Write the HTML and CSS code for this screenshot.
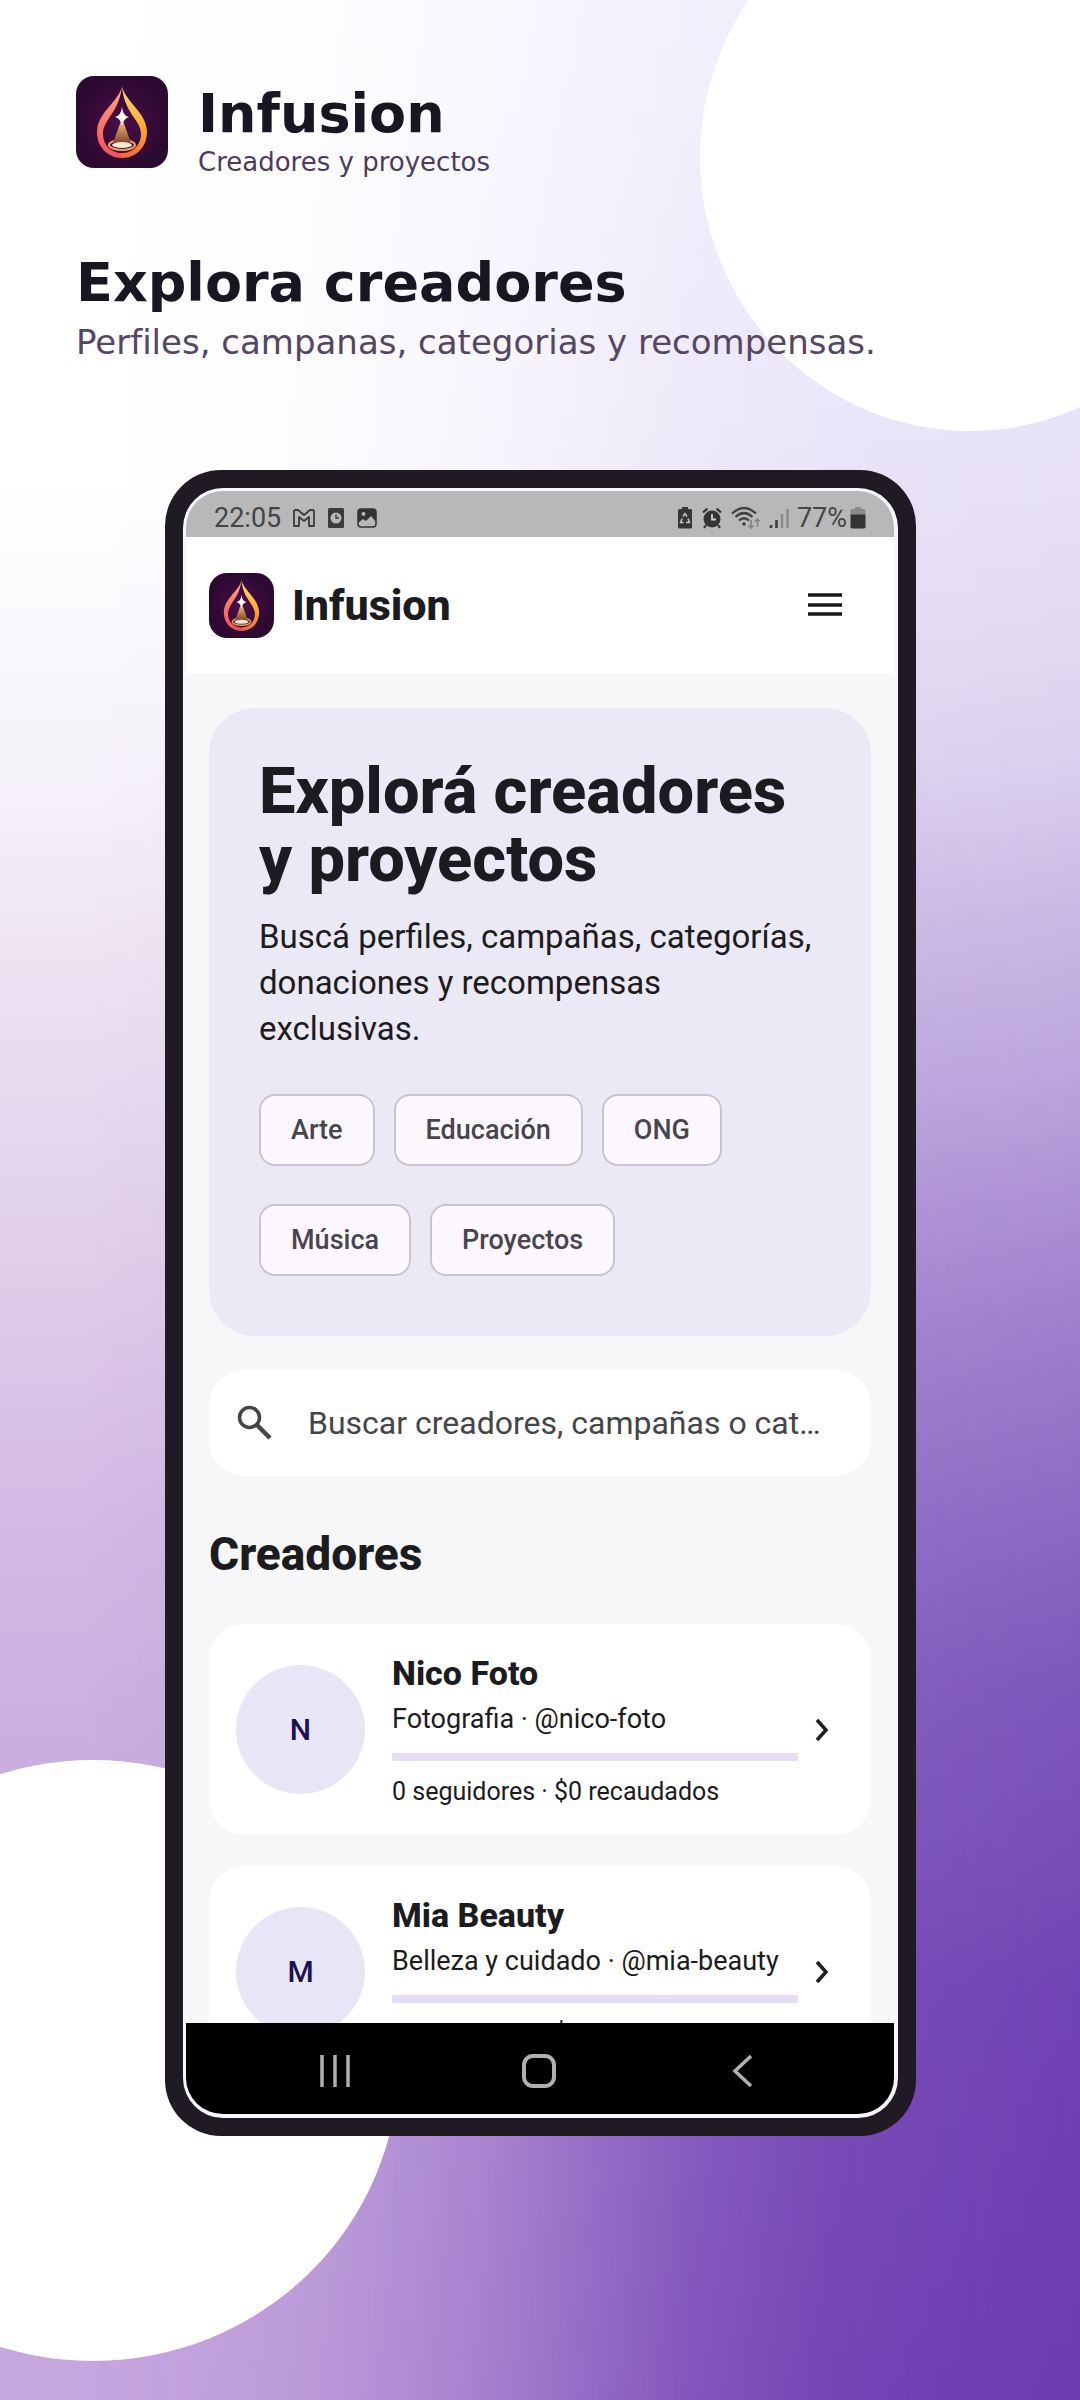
FILE: index.html
```html
<!DOCTYPE html>
<html lang="es">
<head>
<meta charset="utf-8">
<meta name="viewport" content="width=device-width, initial-scale=1">
<title>Infusion – Explora creadores</title>
<link rel="stylesheet" href="styles.css">
</head>
<body>
<svg class="defs" width="0" height="0" aria-hidden="true">
  <defs>
    <radialGradient id="plum"><stop offset="0" stop-color="#4a0d4b"/><stop offset="1" stop-color="#2c0930"/></radialGradient>
    <linearGradient id="coral" x1="0" y1="0" x2="0" y2="1"><stop offset="0" stop-color="#ffb27a"/><stop offset=".45" stop-color="#fb7c67"/><stop offset="1" stop-color="#f2505a"/></linearGradient>
    <linearGradient id="amber" x1="0" y1="0" x2="0" y2="1"><stop offset="0" stop-color="#ffd98a"/><stop offset=".5" stop-color="#fdb233"/><stop offset="1" stop-color="#f7683f"/></linearGradient>
    <linearGradient id="beam" x1="0" y1="0" x2="0" y2="1"><stop offset="0" stop-color="#ffd9a0"/><stop offset=".5" stop-color="#c98a52"/><stop offset="1" stop-color="#7d4530"/></linearGradient>
    <symbol id="logo" viewBox="0 0 92 92">
      <rect width="92" height="92" fill="url(#plum)"/>
      <path fill="url(#coral)" d="M46 9C45 24 21 36 21 56C21 71 32 82 46 82V77C35 77 27 69 27 58C27 43 44 36 46 9Z"/>
      <path fill="url(#amber)" d="M46 9C47 24 71 36 71 56C71 71 60 82 46 82V77C57 77 65 69 65 58C65 44 47 36 46 9Z"/>
      <ellipse cx="46" cy="69" rx="13" ry="5" fill="none" stroke="#f5a04c" stroke-width="2"/>
      <path fill="url(#beam)" d="M46 42L55 67H37Z"/>
      <ellipse cx="46" cy="69" rx="10" ry="3" fill="#fbe6cf"/>
      <path fill="#fff6ea" d="M46 31Q47 40 53 41Q47 43 46 50Q45 43 39 41Q45 40 46 31Z"/>
    </symbol>
  </defs>
</svg>

<div class="page">
  <div class="backdrop" aria-hidden="true">
    <div class="backdrop-right"></div>
    <div class="disc disc-top"></div>
    <div class="disc disc-bottom"></div>
  </div>

  <header class="intro">
    <div class="brand">
      <svg class="brand-logo" role="img" aria-label="Infusion"><use href="#logo"/></svg>
      <div class="brand-text">
        <p class="brand-name">Infusion</p>
        <p class="brand-tag">Creadores y proyectos</p>
      </div>
    </div>
    <h1 class="intro-title">Explora creadores</h1>
    <p class="intro-sub">Perfiles, campanas, categorias y recompensas.</p>
  </header>

  <div class="stage">
    <div class="phone">
      <div class="screen">
        <div class="status">
          <div class="status-group">
            <span class="status-text">22:05</span>
            <svg class="status-m" viewBox="0 0 22 18"><path d="M1 2.500Q1 1 2.500 1H5L11 6L17 1H19.500Q21 1 21 2.500V17H16V8L11 12L6 8V17H1Z" fill="none" stroke="#3c3c3d" stroke-width="1.800" stroke-linejoin="round"/></svg>
            <svg class="status-clock" viewBox="0 0 18 22"><rect x="1" y="1" width="16" height="20" rx="1.500" fill="#3a3a3b"/><circle cx="9" cy="11" r="5.500" fill="#b8b8ba"/><path d="M9 7.500V11H12" fill="none" stroke="#3a3a3b" stroke-width="1.500"/></svg>
            <svg class="status-photo" viewBox="0 0 20 20"><rect x="1" y="1" width="18" height="18" rx="3" fill="#b8b8ba" stroke="#333" stroke-width="1.500"/><path d="M1 3Q1 1 3 1H17Q19 1 19 3V14L14 8L9 13L6 11L1 15Z" fill="#333"/><circle cx="6.500" cy="6" r="2" fill="#b8b8ba"/></svg>
          </div>
          <div class="status-group status-right">
            <svg class="status-saver" viewBox="0 0 16 22"><path d="M5 0H11V2H14Q15 2 15 3.500V20Q15 21.500 13.500 21.500H2.500Q1 21.500 1 20V3.500Q1 2 2.500 2H5Z" fill="#353536"/><path d="M6 9.500L8 6.500L10 9.500M11 11.500L12.500 15.500H9M6.500 15.500H3.500L5 11.500" fill="none" stroke="#c6c6c8" stroke-width="1.500"/></svg>
            <svg class="status-alarm" viewBox="0 0 22 22"><circle cx="11" cy="12" r="8.500" fill="#353536"/><path d="M2 5.500L6.500 1.500M20 5.500L15.500 1.500M5 18L3 21M17 18L19 21" stroke="#353536" stroke-width="2.200"/><path d="M11 7V12.500H15" fill="none" stroke="#d2d2d4" stroke-width="1.800"/></svg>
            <svg class="status-wifi" viewBox="0 0 30 24"><g fill="none" stroke="#404041" stroke-width="2.200"><path d="M1 7.500Q13 -3.500 25 7.500"/><path d="M4.500 11Q13 3 21.500 11"/><path d="M8 14.500Q13 10 18 14.500"/></g><circle cx="13" cy="18" r="1.800" fill="#404041"/><path d="M20 14V22M17.500 19.500L20 22L22.500 19.500M26.500 21V13M24 15.500L26.500 13L29 15.500" fill="none" stroke="#858587" stroke-width="1.700"/></svg>
            <svg class="status-signal" viewBox="0 0 20 22"><path d="M2 18V21M7.500 13V21" stroke="#3a3a3b" stroke-width="2.600"/><path d="M13 7V21M18.500 2V21" stroke="#8c8c8e" stroke-width="2.600"/></svg>
            <span class="status-text">77%</span>
            <svg class="status-battery" viewBox="0 0 16 22"><path d="M5 0H11V2H14Q15.500 2 15.500 4V8H.5V4Q.5 2 2 2H5Z" fill="#8a8a8c"/><path d="M.5 7.500H15.500V19.500Q15.500 21.500 14 21.500H2Q.5 21.500 .5 19.500Z" fill="#333"/></svg>
          </div>
        </div>

        <div class="appbar">
          <svg class="app-logo" aria-hidden="true"><use href="#logo"/></svg>
          <span class="app-name">Infusion</span>
          <button class="menu" type="button" aria-label="Menú"><svg viewBox="0 0 36 26"><path d="M1 3H35M1 13H35M1 22H35" stroke="#18181a" stroke-width="3.500"/></svg></button>
        </div>

        <main class="content">
          <section class="hero">
            <h2 class="hero-title">Explorá creadores<br>y proyectos</h2>
            <p class="hero-text">Buscá perfiles, campañas, categorías,<br>donaciones y recompensas<br>exclusivas.</p>
            <div class="chips">
              <button class="chip" type="button">Arte</button>
              <button class="chip" type="button">Educación</button>
              <button class="chip" type="button">ONG</button>
              <button class="chip" type="button">Música</button>
              <button class="chip" type="button">Proyectos</button>
            </div>
          </section>

          <label class="search">
            <svg class="search-icon" viewBox="0 0 36 36" aria-hidden="true"><circle cx="12.500" cy="12.500" r="10" fill="none" stroke="#454449" stroke-width="3.500"/><path d="M20 20L33 33" stroke="#454449" stroke-width="4.500"/></svg>
            <input class="search-input" type="text" aria-label="Buscar" placeholder="Buscar creadores, campañas o cat…">
          </label>

          <h2 class="section-title">Creadores</h2>

          <a class="card" href="#nico-foto">
            <span class="avatar">N</span>
            <span class="card-body">
              <span class="card-name">Nico Foto</span>
              <span class="card-sub">Fotografia · @nico-foto</span>
              <span class="bar"></span>
              <span class="card-meta">0 seguidores · $0 recaudados</span>
            </span>
            <svg class="chevron" viewBox="0 0 16 24" aria-hidden="true"><path d="M3 2L12 12L3 22" fill="none" stroke="#1f1f22" stroke-width="3.500"/></svg>
          </a>

          <a class="card" href="#mia-beauty">
            <span class="avatar">M</span>
            <span class="card-body">
              <span class="card-name">Mia Beauty</span>
              <span class="card-sub">Belleza y cuidado · @mia-beauty</span>
              <span class="bar"></span>
              <span class="card-meta">0 seguidores · $0 recaudados</span>
            </span>
            <svg class="chevron" viewBox="0 0 16 24" aria-hidden="true"><path d="M3 2L12 12L3 22" fill="none" stroke="#1f1f22" stroke-width="3.500"/></svg>
          </a>
        </main>

        <nav class="navbar" aria-label="Sistema">
          <button class="nav-btn" type="button" aria-label="Recientes"><svg viewBox="0 0 34 34"><path d="M4 1V33M17 1V33M30 1V33" stroke="#b0b0b0" stroke-width="3.500"/></svg></button>
          <button class="nav-btn" type="button" aria-label="Inicio"><svg viewBox="0 0 34 34"><rect x="2" y="2" width="30" height="30" rx="9" fill="none" stroke="#b0b0b0" stroke-width="4"/></svg></button>
          <button class="nav-btn" type="button" aria-label="Atrás"><svg viewBox="0 0 34 34"><path d="M25 2L9 17L25 32" fill="none" stroke="#b0b0b0" stroke-width="3.500"/></svg></button>
        </nav>
      </div>
    </div>
  </div>
</div>
</body>
</html>
```
FILE: styles.css
```css
* { box-sizing: border-box; }

body {
  margin: 0;
  font-family: Roboto, "Liberation Sans", sans-serif;
  color: #1c1b20;
}

p, h1, h2 { margin: 0; }

button {
  margin: 0;
  padding: 0;
  border: 0;
  background: none;
  font: inherit;
  color: inherit;
}

svg { display: block; flex: none; }

.defs { position: absolute; }

.page {
  position: relative;
  min-height: 100vh;
  padding: 76px 0 0;
  overflow: hidden;
}

/* Backdrop: left-hand colours with the right-hand ones fading in across */
.backdrop {
  position: absolute;
  inset: 0;
  z-index: -1;
  overflow: hidden;
  background: linear-gradient(#fff 20%, #f8f5fb 29%, #f4eff8 34%, #ebdff1 42%, #dfcbe9 54%, #d3bae5 63%, #cbaee0 73%, #c6a6df 100%);
}

.backdrop-right {
  position: absolute;
  inset: 0;
  background: linear-gradient(#efeafd 0%, #e8e2f7 18%, #e3daf2 26%, #d9cfee 32%, #cab8e4 38%, #bba4dc 45%, #a98cd3 51%, #9a79ca 57%, #8a67c2 64%, #7e57bb 70%, #774eb7 77%, #7043b4 83%, #6b3ab0 100%);
  -webkit-mask-image: linear-gradient(90deg, transparent 8%, rgb(0 0 0 / 6%) 21%, rgb(0 0 0 / 14%) 31%, rgb(0 0 0 / 35%) 45%, rgb(0 0 0 / 58%) 56%, rgb(0 0 0 / 74%) 64%, rgb(0 0 0 / 90%) 77%, #000 100%);
  mask-image: linear-gradient(90deg, transparent 8%, rgb(0 0 0 / 6%) 21%, rgb(0 0 0 / 14%) 31%, rgb(0 0 0 / 35%) 45%, rgb(0 0 0 / 58%) 56%, rgb(0 0 0 / 74%) 64%, rgb(0 0 0 / 90%) 77%, #000 100%);
}

.disc {
  position: absolute;
  border-radius: 50%;
  background: #fff;
}

.disc-top { top: -117px; right: -160px; width: 540px; height: 548px; }
.disc-bottom { bottom: 39px; left: -213px; width: 612px; height: 601px; }

/* Intro */
.intro {
  padding: 0 77px 0 76px;
  font-family: "DejaVu Sans", sans-serif;
  color: #1a1522;
}

.brand {
  display: flex;
  align-items: flex-start;
  gap: 30px;
}

.brand-logo { width: 92px; height: 92px; border-radius: 18px; }
.brand-text { padding-top: 10px; }
.brand-name { font-size: 54px; line-height: 56px; font-weight: 700; }
.brand-tag { margin-top: 4px; font-size: 26px; line-height: 32px; color: #4b3d5a; }
.intro-title { margin-top: 73px; font-size: 54px; line-height: 64px; font-weight: 700; }
.intro-sub { margin-top: 5px; font-size: 34px; line-height: 44px; color: #554662; }

/* Phone */
.stage { padding: 106px 164px 0 165px; }

.phone {
  aspect-ratio: 751 / 1666;
  padding: 18px;
  border-radius: 56px;
  background: #201a25;
}

.screen {
  display: flex;
  flex-direction: column;
  height: 100%;
  border: solid #f7f6fb;
  border-width: 3px 4px 4px 3px;
  border-radius: 40px;
  overflow: hidden;
  background: #f7f7fa;
}

.status {
  display: flex;
  flex: none;
  justify-content: space-between;
  height: 46px;
  padding: 7px 28px 0;
  background: #b8b8ba;
}

.status-group { display: flex; align-items: center; gap: 12px; }
.status-right { gap: 8px; }
.status-text { font-size: 27px; line-height: 40px; color: #454546; font-weight: 400; }
.status-m { width: 22px; height: 18px; }
.status-clock { width: 18px; height: 22px; }
.status-photo { width: 20px; height: 20px; }
.status-saver { width: 16px; height: 22px; }
.status-alarm { width: 22px; height: 22px; }
.status-wifi { width: 30px; height: 24px; }
.status-signal { width: 20px; height: 22px; }
.status-battery { width: 16px; height: 22px; margin-left: -5px; }

.appbar {
  display: flex;
  flex: none;
  align-items: center;
  gap: 18px;
  height: 136px;
  padding: 0 51px 0 23px;
  background: #fff;
}

.app-logo { width: 65px; height: 65px; border-radius: 18px; }
.app-name { font-size: 43px; line-height: 48px; font-weight: 800; }
.menu { margin-left: auto; }
.menu svg { width: 36px; height: 26px; }

.content {
  flex: 1;
  min-height: 0;
  padding: 35px 23px 0;
  overflow: hidden;
}

.hero {
  padding: 49px 50px 60px;
  border-radius: 46px;
  background: #ece9f6;
}

.hero-title { font-size: 65px; line-height: 68px; font-weight: 800; }
.hero-text { margin-top: 21px; font-size: 33px; line-height: 46px; white-space: nowrap; }

.chips {
  display: flex;
  flex-wrap: wrap;
  gap: 38px 19px;
  margin-top: 42px;
}

.chip {
  height: 72px;
  padding: 0 30px;
  border: 2px solid #cac4d0;
  border-radius: 16px;
  background: #fdf8ff;
  font-size: 27px;
  font-weight: 500;
  color: #48454e;
}

.search {
  display: flex;
  align-items: center;
  gap: 35px;
  height: 106px;
  margin-top: 34px;
  padding: 0 28px;
  border-radius: 36px;
  background: #fff;
}

.search-icon { width: 36px; height: 36px; }

.search-input {
  flex: 1;
  min-width: 0;
  padding: 0;
  border: 0;
  outline: 0;
  background: none;
  font: 400 32px/46px Roboto, sans-serif;
  color: #454449;
}

.search-input::placeholder { color: #454449; opacity: 1; }

.section-title {
  margin: 52px 0 44px;
  font-size: 46px;
  line-height: 52px;
  font-weight: 800;
}

.card {
  display: flex;
  align-items: center;
  margin-bottom: 31px;
  padding: 26px 41px 26px 27px;
  border-radius: 36px;
  background: #fff;
  color: inherit;
  text-decoration: none;
}

.avatar {
  display: grid;
  flex: none;
  place-items: center;
  width: 129px;
  height: 129px;
  border-radius: 50%;
  background: #e8e6f6;
  font-size: 30px;
  font-weight: 500;
  color: #21104f;
}

.card-body {
  display: flex;
  flex: 1;
  flex-direction: column;
  min-width: 0;
  margin-left: 27px;
}

.card-name { font-size: 34px; line-height: 46px; font-weight: 800; }
.card-sub { font-size: 27px; line-height: 46px; white-space: nowrap; }
.bar { height: 8px; margin: 11px 0 14px; background: #e6def5; }
.card-meta { font-size: 25px; line-height: 34px; }
.chevron { width: 16px; height: 24px; margin-left: 16px; }

.navbar {
  display: flex;
  flex: none;
  align-items: center;
  justify-content: space-between;
  height: 91px;
  padding: 4px 134px 0 132px;
  background: #000;
}

.nav-btn svg { width: 34px; height: 34px; }
```
